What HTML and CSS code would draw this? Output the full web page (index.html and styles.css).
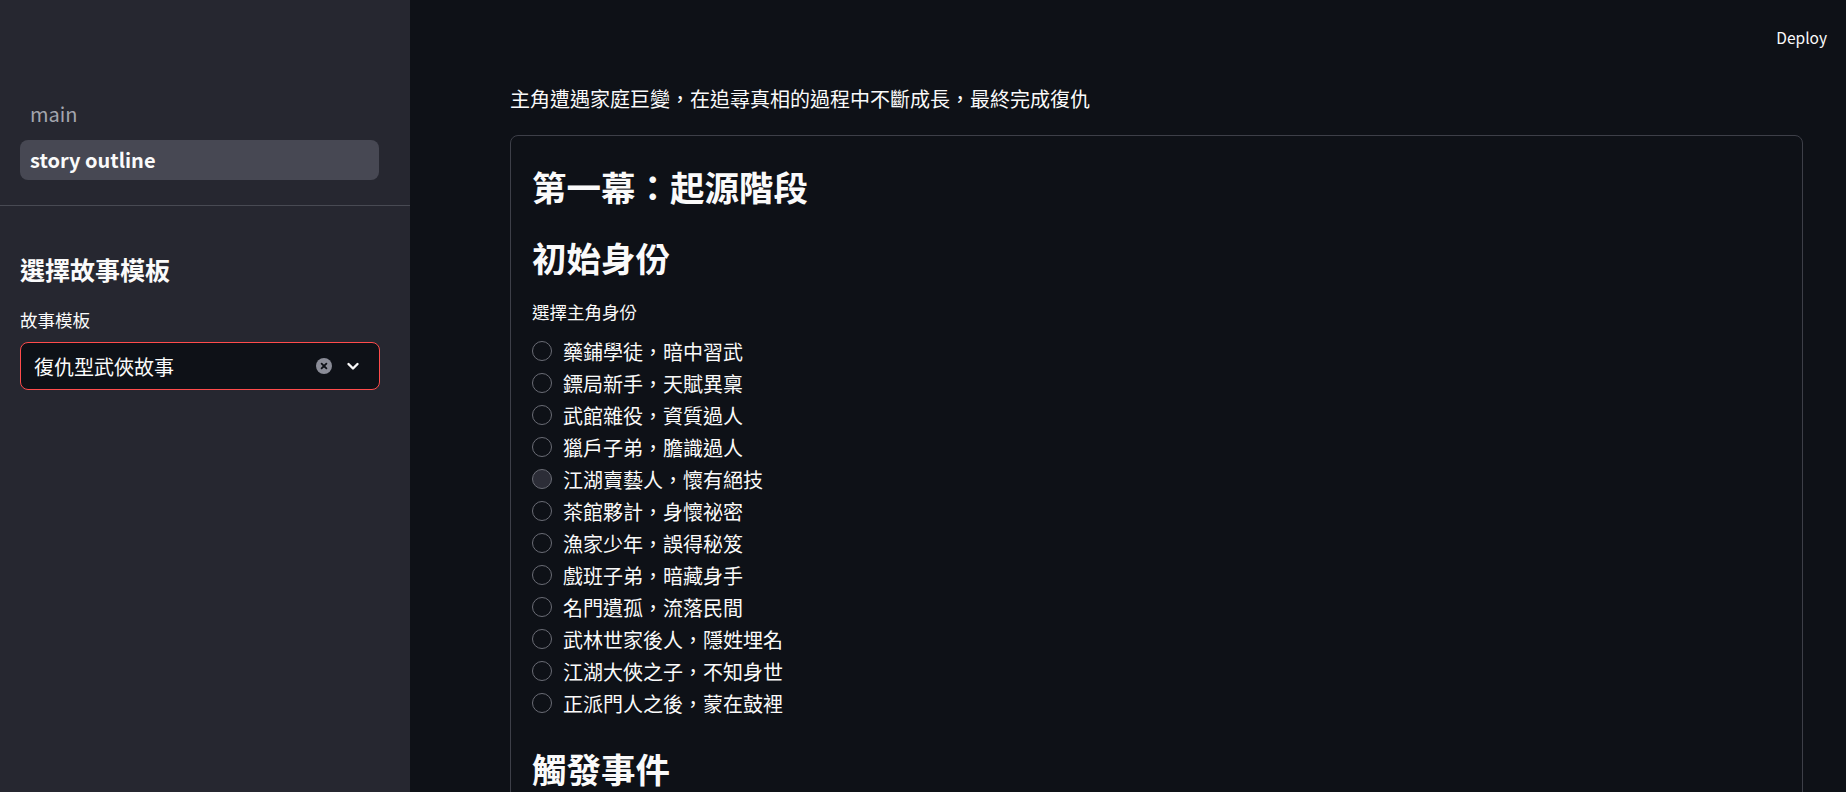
FILE: index.html
```html
<!DOCTYPE html>
<html lang="zh-Hant">
<head>
<meta charset="utf-8">
<title>story outline</title>
<link rel="stylesheet" href="styles.css">
</head>
<body>
<div class="app">
  <aside class="sidebar">
    <nav class="nav">
      <div class="nav-item">main</div>
      <div class="nav-item active">story outline</div>
    </nav>
    <div class="side-content">
      <h2 class="side-heading">選擇故事模板</h2>
      <div class="field-label">故事模板</div>
      <div class="select">
        <span class="select-value">復仇型武俠故事</span>
        <span class="select-icons">
          <svg class="clear-icon" width="16" height="16" viewBox="0 0 16 16"><circle cx="8" cy="8" r="8" fill="#8a8c97"/><path d="M5.6 5.6l4.8 4.8M10.4 5.6l-4.8 4.8" stroke="#0e1117" stroke-width="1.8" stroke-linecap="round"/></svg>
          <svg class="chevron" width="20" height="20" viewBox="0 0 20 20"><path d="M5.5 8l4.5 4.5L14.5 8" fill="none" stroke="#fafafa" stroke-width="2.4" stroke-linecap="round" stroke-linejoin="round"/></svg>
        </span>
      </div>
    </div>
  </aside>
  <main class="main">
    <header class="topbar"><span class="deploy">Deploy</span></header>
    <div class="content">
      <p class="intro">主角遭遇家庭巨變，在追尋真相的過程中不斷成長，最終完成復仇</p>
      <section class="card">
        <h2 class="h2 first">第一幕：起源階段</h2>
        <h2 class="h2">初始身份</h2>
        <div class="field-label radio-label">選擇主角身份</div>
        <div class="radio-group">
          <div class="radio"><span class="dot"></span><span>藥鋪學徒，暗中習武</span></div>
          <div class="radio"><span class="dot"></span><span>鏢局新手，天賦異稟</span></div>
          <div class="radio"><span class="dot"></span><span>武館雜役，資質過人</span></div>
          <div class="radio"><span class="dot"></span><span>獵戶子弟，膽識過人</span></div>
          <div class="radio hover"><span class="dot"></span><span>江湖賣藝人，懷有絕技</span></div>
          <div class="radio"><span class="dot"></span><span>茶館夥計，身懷祕密</span></div>
          <div class="radio"><span class="dot"></span><span>漁家少年，誤得秘笈</span></div>
          <div class="radio"><span class="dot"></span><span>戲班子弟，暗藏身手</span></div>
          <div class="radio"><span class="dot"></span><span>名門遺孤，流落民間</span></div>
          <div class="radio"><span class="dot"></span><span>武林世家後人，隱姓埋名</span></div>
          <div class="radio"><span class="dot"></span><span>江湖大俠之子，不知身世</span></div>
          <div class="radio"><span class="dot"></span><span>正派門人之後，蒙在鼓裡</span></div>
        </div>
        <h2 class="h2 next">觸發事件</h2>
      </section>
    </div>
  </main>
</div>
</body>
</html>
```

FILE: styles.css
```css
* { box-sizing: border-box; }
html, body {
  margin: 0;
  padding: 0;
  height: 100%;
  background: #0e1117;
  color: #fafafa;
  font-family: "Noto Sans CJK TC", "Noto Sans", sans-serif;
}
.app {
  display: flex;
  height: 792px;
  overflow: hidden;
}
.sidebar {
  width: 410px;
  flex: none;
  background: #262730;
  display: flex;
  flex-direction: column;
}
.nav {
  padding: 94px 31px 25px 20px;
  border-bottom: 1px solid #484a53;
  display: flex;
  flex-direction: column;
  gap: 6px;
  flex: none;
}
.nav-item {
  height: 40px;
  line-height: 40px;
  padding-left: 10px;
  font-size: 20px;
  color: #a3a5ae;
  border-radius: 8px;
}
.nav-item.active {
  background: #474853;
  color: #fafafa;
  font-weight: 700;
}
.side-content {
  padding: 0 30px 0 20px;
}
.side-heading {
  margin: 47px 0 0 0;
  font-size: 25px;
  line-height: 32px;
  font-weight: 700;
}
.field-label {
  font-size: 17.5px;
  line-height: 24px;
  margin-top: 23px;
  color: #fafafa;
  font-weight: 400;
}
.select {
  margin-top: 10px;
  height: 48px;
  border: 1px solid #ff4b4b;
  border-radius: 8px;
  background: #0e1117;
  display: flex;
  align-items: center;
  padding: 0 16px 0 13px;
}
.select-value {
  flex: 1;
  font-size: 20px;
}
.select-icons {
  display: flex;
  align-items: center;
  gap: 11px;
}
.clear-icon, .chevron { display: block; }
.main {
  flex: 1;
  display: flex;
  flex-direction: column;
  min-width: 0;
}
.topbar {
  height: 73px;
  flex: none;
  display: flex;
  justify-content: flex-end;
  align-items: center;
  padding-right: 19px;
}
.deploy {
  font-size: 15.5px;
  color: #fafafa;
}
.content {
  padding: 0 43px 0 100px;
  flex: none;
}
.intro {
  margin: 12px 0 0 0;
  font-size: 20px;
  line-height: 28px;
}
.card {
  margin-top: 22px;
  border: 1px solid #3d3f48;
  border-radius: 8px;
  padding: 0 21px 40px 21px;
}
.h2 {
  margin: 27px 0 0 0;
  font-size: 34.5px;
  line-height: 44px;
  font-weight: 700;
}
.h2.first { margin-top: 28px; }
.h2.next { margin-top: 27px; }
.radio-label { margin-top: 21px; }
.radio-group {
  margin-top: 11px;
  display: flex;
  flex-direction: column;
}
.radio {
  height: 32px;
  display: flex;
  align-items: center;
  gap: 11px;
  font-size: 20px;
}
.dot {
  width: 20px;
  height: 20px;
  border-radius: 50%;
  border: 1px solid #6a6c75;
  flex: none;
}
.radio.hover .dot {
  background: #2c2d37;
}
```
